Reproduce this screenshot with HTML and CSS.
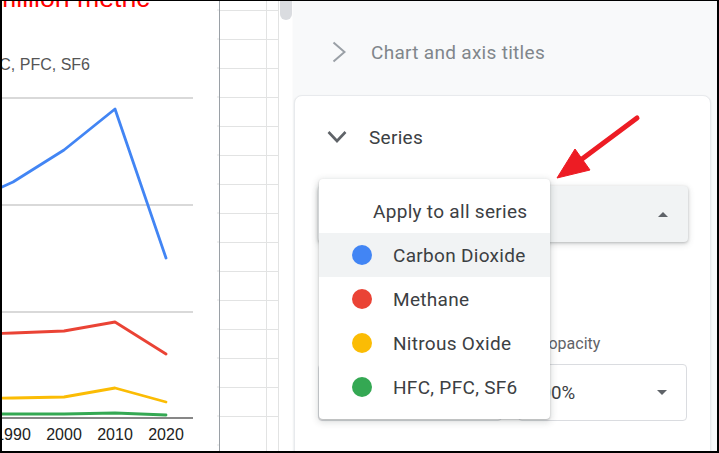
FILE: index.html
```html
<!DOCTYPE html>
<html lang="en">
<head>
<meta charset="utf-8">
<title>Chart editor - Series</title>
<link rel="stylesheet" href="styles.css">
</head>
<body>
<div class="frame">
  <div class="chart">
    <svg width="217" height="450" viewBox="2 1 217 450" xmlns="http://www.w3.org/2000/svg">
      <text class="chart-title" x="-6" y="6.5">million metric</text>
      <text class="chart-legend" x="90" y="70" text-anchor="end">HFC, PFC, SF6</text>
      <g class="grid">
        <line x1="0" y1="98" x2="193" y2="98"/>
        <line x1="0" y1="205" x2="193" y2="205"/>
        <line x1="0" y1="312" x2="193" y2="312"/>
      </g>
      <g class="ticks">
        <line x1="217" y1="10" x2="219" y2="10"/><line x1="217" y1="39" x2="219" y2="39"/>
        <line x1="217" y1="68" x2="219" y2="68"/><line x1="217" y1="97" x2="219" y2="97"/>
        <line x1="217" y1="126" x2="219" y2="126"/><line x1="217" y1="155" x2="219" y2="155"/>
        <line x1="217" y1="184" x2="219" y2="184"/><line x1="217" y1="213" x2="219" y2="213"/>
        <line x1="217" y1="242" x2="219" y2="242"/><line x1="217" y1="271" x2="219" y2="271"/>
        <line x1="217" y1="300" x2="219" y2="300"/><line x1="217" y1="329" x2="219" y2="329"/>
        <line x1="217" y1="358" x2="219" y2="358"/><line x1="217" y1="387" x2="219" y2="387"/>
        <line x1="217" y1="416" x2="219" y2="416"/><line x1="217" y1="445" x2="219" y2="445"/>
      </g>
      <polyline class="series s-blue" points="-38,205 13,182 64,150 115,109 166,258"/>
      <polyline class="series s-red" points="-38,335 13,333 64,331 115,322 166,354"/>
      <polyline class="series s-yellow" points="-38,399 13,398 64,397 115,388 166,402"/>
      <polyline class="series s-green" points="-38,414 13,414 64,414 115,413 166,415"/>
      <line class="baseline" x1="0" y1="418" x2="193" y2="418"/>
      <g class="axis-labels">
        <text x="13" y="440">1990</text>
        <text x="64" y="440">2000</text>
        <text x="115" y="440">2010</text>
        <text x="166" y="440">2020</text>
      </g>
    </svg>
  </div>

  <div class="sheet-grid">
    <div class="sheet-col col-a"></div>
    <div class="sheet-col col-b"></div>
  </div>

  <div class="scrollbar"><div class="thumb"></div></div>

  <aside class="sidebar">
    <div class="section-row collapsed">
      <svg class="chev-right" width="14" height="22" viewBox="0 0 14 22"><polyline points="1.5,1.5 12.5,11 1.5,20.5"/></svg>
      <span>Chart and axis titles</span>
    </div>

    <div class="card">
      <div class="section-row open">
        <svg class="chev-down" width="20" height="14" viewBox="0 0 20 14"><polyline points="1.5,2 10,11 18.5,2"/></svg>
        <span>Series</span>
      </div>

      <div class="series-select">
        <span class="select-value"></span>
        <span class="tri tri-up"></span>
      </div>

      <div class="fields">
        <div class="field field-color">
          <div class="field-label"></div>
          <div class="field-box"></div>
        </div>
        <div class="field field-opacity">
          <div class="field-label">Fill opacity</div>
          <div class="field-box"><span class="box-value">100%</span><span class="tri tri-down"></span></div>
        </div>
      </div>
    </div>
  </aside>

  <div class="menu">
    <div class="menu-item menu-all">Apply to all series</div>
    <div class="menu-item active"><span class="dot dot-blue"></span>Carbon Dioxide</div>
    <div class="menu-item"><span class="dot dot-red"></span>Methane</div>
    <div class="menu-item"><span class="dot dot-yellow"></span>Nitrous Oxide</div>
    <div class="menu-item"><span class="dot dot-green"></span>HFC, PFC, SF6</div>
  </div>

  <svg class="arrow" width="719" height="453" viewBox="0 0 719 453">
    <line x1="637" y1="118" x2="578" y2="162"/>
    <polygon points="557,178 575,149 590,170"/>
  </svg>
</div>
</body>
</html>
```

FILE: styles.css
```css
* { box-sizing: border-box; }

html, body {
  margin: 0;
  padding: 0;
  background: #ffffff;
}

.frame {
  position: relative;
  width: 719px;
  height: 453px;
  border: solid #000000;
  border-width: 1px 2px 2px 2px;
  display: flex;
  overflow: hidden;
  background: #ffffff;
  font-family: Roboto, "Noto Sans", Arial, sans-serif;
}

/* ---------- chart ---------- */
.chart {
  width: 217px;
  flex: none;
}
.chart svg { display: block; overflow: hidden; }

.chart-title {
  font-family: "Liberation Sans", Arial, sans-serif;
  font-size: 26.7px;
  fill: #ff0000;
}
.chart-legend {
  font-family: "Liberation Sans", Arial, sans-serif;
  font-size: 16px;
  fill: #555555;
}
.grid line { stroke: #cccccc; stroke-width: 1.3; }
.ticks line { stroke: #e2e3e3; stroke-width: 1; }
.baseline { stroke: #5f5f5f; stroke-width: 1.5; }
.series {
  fill: none;
  stroke-width: 2.8;
  stroke-linejoin: round;
  stroke-linecap: round;
}
.s-blue { stroke: #4285f4; }
.s-red { stroke: #ea4335; }
.s-yellow { stroke: #fbbc04; }
.s-green { stroke: #34a853; }
.axis-labels text {
  font-family: "Liberation Sans", Arial, sans-serif;
  font-size: 16px;
  fill: #222222;
  text-anchor: middle;
}

/* ---------- sheet grid strip ---------- */
.sheet-grid {
  width: 60px;
  flex: none;
  display: flex;
  border-left: 1px solid #9aa0a6;
}
.sheet-col {
  border-right: 1px solid #e2e3e3;
  background-image: repeating-linear-gradient(to bottom, transparent 0 28px, #e2e3e3 28px 29px);
  background-position: 0 -19px;
}
.col-a { width: 47px; }
.col-b { width: 12px; }

.scrollbar {
  width: 13px;
  flex: none;
  padding-left: 1px;
  background: #ffffff;
}
.thumb {
  width: 12px;
  height: 19px;
  background: #dadce0;
  border-radius: 0 0 6px 6px;
}

/* ---------- sidebar ---------- */
.sidebar {
  flex: 1;
  background: #f8f9fa;
  border-left: 1px solid #fcfcfc;
  padding: 19px 6px 0 1px;
  overflow: hidden;
  display: flex;
  flex-direction: column;
}

.section-row {
  flex: none;
  display: flex;
  align-items: center;
  font-size: 19px;
  letter-spacing: 0.3px;
}
.section-row svg { flex: none; }
.section-row polyline { fill: none; stroke-linecap: butt; stroke-linejoin: miter; }

.collapsed {
  height: 64px;
  padding-left: 38px;
  gap: 25px;
  color: #80868b;
}
.chev-right polyline { stroke: #9aa0a6; stroke-width: 2; }

.card {
  margin-top: 11px;
  flex: none;
  height: 420px;
  background: #ffffff;
  border: 1px solid #e8eaed;
  border-radius: 8px;
  box-shadow: 0 1px 2px rgba(60, 64, 67, 0.12);
  padding-top: 17px;
}

.open {
  height: 48px;
  padding-left: 32px;
  gap: 22px;
  color: #3c4043;
}
.chev-down polyline { stroke: #5f6368; stroke-width: 2.6; }

.series-select {
  margin: 25px 22px 0 23px;
  height: 56px;
  background: #f1f3f4;
  border-radius: 4px;
  box-shadow: 0 1px 3px rgba(60, 64, 67, 0.3), 0 2px 6px 1px rgba(60, 64, 67, 0.12);
  display: flex;
  align-items: center;
  justify-content: space-between;
  padding: 0 20px 0 16px;
  font-size: 19px;
  color: #3c4043;
}

.tri {
  width: 0;
  height: 0;
  border-left: 5.5px solid transparent;
  border-right: 5.5px solid transparent;
}
.tri-up { border-bottom: 5.5px solid #5f6368; }
.tri-down { border-top: 5.5px solid #5f6368; }

.fields {
  margin: 92px 23px 0 23px;
  display: flex;
  gap: 16px;
}
.field-color { width: 184px; }
.field-opacity { flex: 1; }
.field-label {
  height: 20px;
  line-height: 20px;
  font-size: 16px;
  color: #5f6368;
  padding-left: 6px;
  margin-bottom: 10px;
}
.field-box {
  height: 57px;
  border: 1px solid #dadce0;
  border-radius: 4px;
  display: flex;
  align-items: center;
  justify-content: space-between;
  padding: 0 19px 0 11px;
}
.box-value {
  font-size: 18.7px;
  color: #3c4043;
}

/* ---------- dropdown menu ---------- */
.menu {
  position: absolute;
  left: 317px;
  top: 178px;
  width: 231px;
  height: 240px;
  background: #ffffff;
  border-radius: 4px;
  box-shadow: 0 1px 2px rgba(60, 64, 67, 0.3), 0 2px 6px 2px rgba(60, 64, 67, 0.15);
  padding: 10px 0;
}
.menu-item {
  height: 44px;
  display: flex;
  align-items: center;
  padding-left: 33px;
  font-size: 19px;
  letter-spacing: 0.3px;
  color: #3c4043;
  white-space: nowrap;
}
.menu-all { padding-left: 54px; }
.menu-item.active { background: #f1f3f4; }
.dot {
  width: 20px;
  height: 20px;
  border-radius: 50%;
  margin-right: 21px;
  flex: none;
}
.dot-blue { background: #4285f4; }
.dot-red { background: #ea4335; }
.dot-yellow { background: #fbbc04; }
.dot-green { background: #34a853; }

/* ---------- annotation arrow ---------- */
.arrow {
  position: absolute;
  left: -2px;
  top: -1px;
  pointer-events: none;
}
.arrow line {
  stroke: #ed1c24;
  stroke-width: 5;
  stroke-linecap: round;
}
.arrow polygon { fill: #ed1c24; stroke: #ed1c24; stroke-width: 1; stroke-linejoin: round; }
```
